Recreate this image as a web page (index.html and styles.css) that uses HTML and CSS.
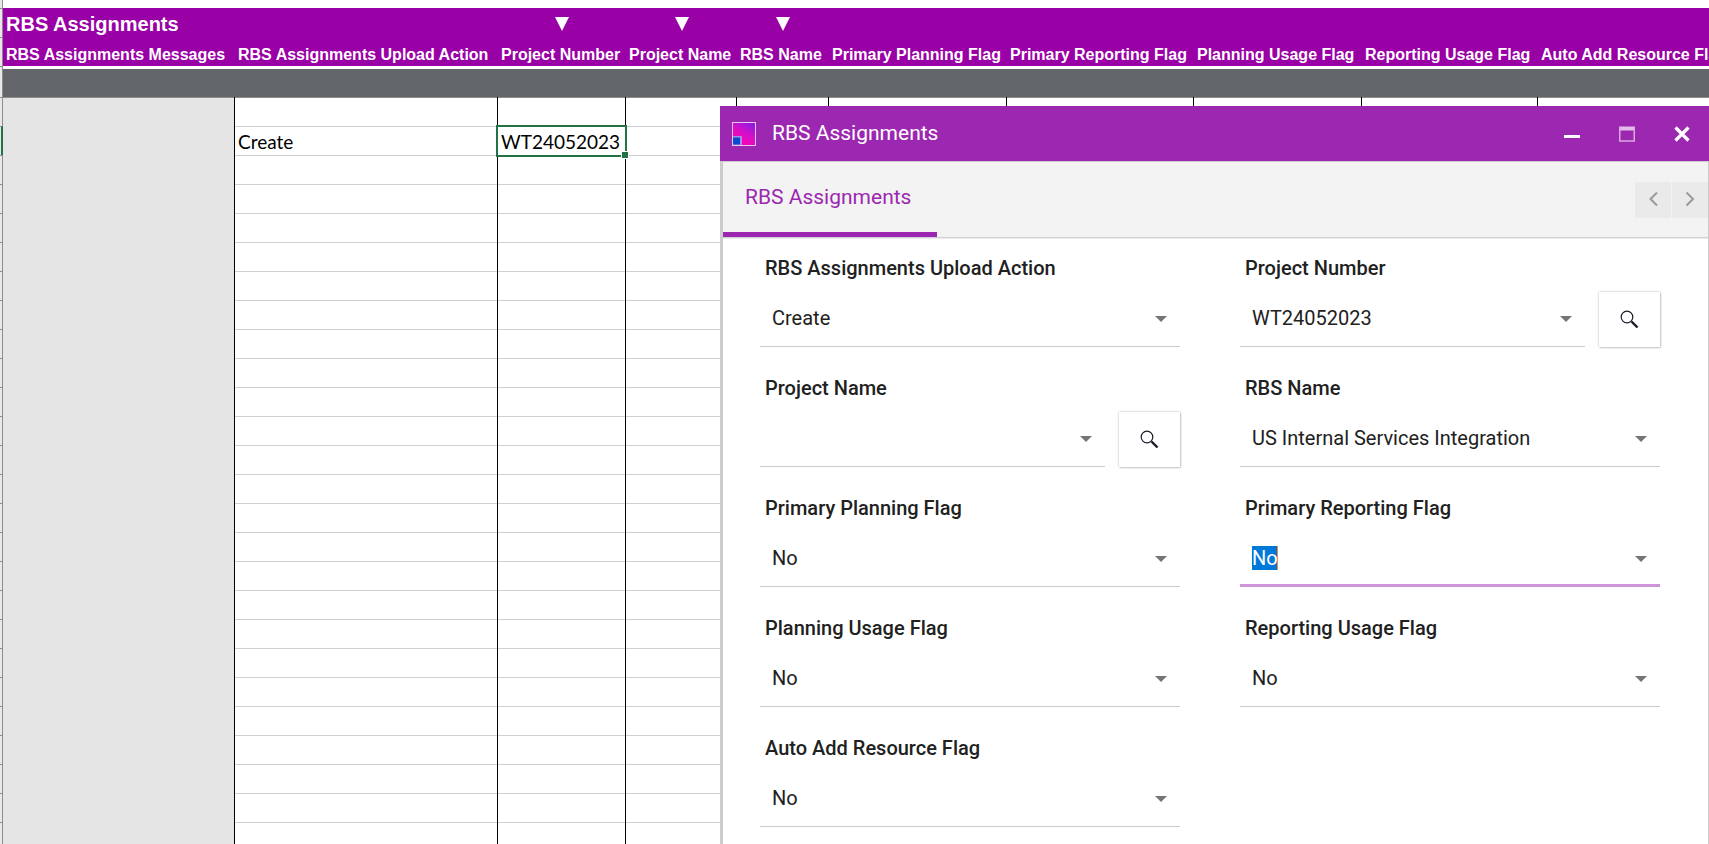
FILE: index.html
```html
<!DOCTYPE html>
<html lang="en">
<head>
  <meta charset="UTF-8">
  <meta name="viewport" content="width=device-width, initial-scale=1.0">
  <title>RBS Assignments</title>
  <link rel="stylesheet" href="styles.css">
</head>
<body>

<!-- Spreadsheet -->
<main class="sheet">
  <table>
    <colgroup>
      <col class="col-rownum">
      <col class="col-messages">
      <col class="col-action">
      <col class="col-number">
      <col class="col-project">
      <col class="col-rbs">
      <col class="col-pplan">
      <col class="col-preport">
      <col class="col-uplan">
      <col class="col-ureport">
      <col class="col-auto">
    </colgroup>
    <thead>
      <tr class="row-top">
        <td class="rownum"></td>
        <td colspan="10"></td>
      </tr>
      <tr class="row-title">
        <td class="rownum"></td>
        <th colspan="2">RBS Assignments</th>
        <td><span class="lov"></span></td>
        <td><span class="lov"></span></td>
        <td><span class="lov"></span></td>
        <td colspan="5"></td>
      </tr>
      <tr class="row-head">
        <td class="rownum"></td>
        <th>RBS Assignments Messages</th>
        <th>RBS Assignments Upload Action</th>
        <th>Project Number</th>
        <th>Project Name</th>
        <th>RBS Name</th>
        <th>Primary Planning Flag</th>
        <th>Primary Reporting Flag</th>
        <th>Planning Usage Flag</th>
        <th>Reporting Usage Flag</th>
        <th>Auto Add Resource Flag</th>
      </tr>
      <tr class="row-band">
        <td class="rownum"></td>
        <td colspan="10"></td>
      </tr>
    </thead>
    <tbody id="rows"></tbody>
  </table>
</main>

<!-- Form window -->
<section class="dialog">
  <header class="titlebar">
    <svg class="app-icon" viewBox="0 0 24 24">
      <defs>
        <linearGradient id="appFill" x1="1" y1="0" x2="0.4" y2="1">
          <stop offset="0" stop-color="#7a1fe6"/>
          <stop offset="0.55" stop-color="#d80fc8"/>
          <stop offset="1" stop-color="#ff00b4"/>
        </linearGradient>
      </defs>
      <rect x="0.5" y="0.5" width="23" height="23" fill="url(#appFill)" stroke="#ecc4f0"/>
      <rect x="1" y="14" width="9" height="9" fill="#a98be6"/>
      <rect x="1" y="15.500" width="7" height="7" fill="#0b49d0"/>
    </svg>
    <h1>RBS Assignments</h1>
    <div class="window-buttons">
      <button type="button" aria-label="Minimize">
        <svg viewBox="0 0 16 16"><path d="M0 9h16v3H0z" fill="#fff"/></svg>
      </button>
      <button type="button" aria-label="Maximize" disabled>
        <svg viewBox="0 0 16 16"><path d="M0 0.5h16v4H0z" fill="#e3bce8"/><path d="M0.75 1v14h14.5V1" fill="none" stroke="#dba9e1" stroke-width="1.5"/></svg>
      </button>
      <button type="button" aria-label="Close">
        <svg viewBox="0 0 16 16"><path d="M1.5 1.5l13 13M14.5 1.5l-13 13" stroke="#fff" stroke-width="3.2"/></svg>
      </button>
    </div>
  </header>

  <div class="dialog-body">
    <nav class="tabs">
      <button type="button" class="tab">RBS Assignments</button>
      <div class="tab-scroll">
        <button type="button" aria-label="Previous tab">
          <svg viewBox="0 0 16 16"><path d="M12 0.500L5.500 7l6.500 6.500" fill="none" stroke="#9a9a9a" stroke-width="2"/></svg>
        </button>
        <button type="button" aria-label="Next tab">
          <svg viewBox="0 0 16 16"><path d="M4.500 0.500L11 7l-6.500 6.500" fill="none" stroke="#9a9a9a" stroke-width="2"/></svg>
        </button>
      </div>
    </nav>

    <form class="fields">
      <div class="field">
        <label for="action">RBS Assignments Upload Action</label>
        <div class="control">
          <select id="action"><option>Create</option></select>
        </div>
      </div>
      <div class="field">
        <label for="number">Project Number</label>
        <div class="control">
          <select id="number"><option>WT24052023</option></select>
          <button type="button" class="search" aria-label="Search project number">
            <svg viewBox="0 0 20 20"><circle cx="7" cy="7" r="5.8"/><path d="M11.500 11.500l6 6"/></svg>
          </button>
        </div>
      </div>
      <div class="field">
        <label for="project">Project Name</label>
        <div class="control">
          <select id="project"><option></option></select>
          <button type="button" class="search" aria-label="Search project name">
            <svg viewBox="0 0 20 20"><circle cx="7" cy="7" r="5.8"/><path d="M11.500 11.500l6 6"/></svg>
          </button>
        </div>
      </div>
      <div class="field">
        <label for="rbs">RBS Name</label>
        <div class="control">
          <select id="rbs"><option>US Internal Services Integration</option></select>
        </div>
      </div>
      <div class="field">
        <label for="pplan">Primary Planning Flag</label>
        <div class="control">
          <select id="pplan"><option>No</option><option>Yes</option></select>
        </div>
      </div>
      <div class="field">
        <label for="preport">Primary Reporting Flag</label>
        <div class="control">
          <select id="preport" class="active"><option>No</option><option>Yes</option></select>
        </div>
      </div>
      <div class="field">
        <label for="uplan">Planning Usage Flag</label>
        <div class="control">
          <select id="uplan"><option>No</option><option>Yes</option></select>
        </div>
      </div>
      <div class="field">
        <label for="ureport">Reporting Usage Flag</label>
        <div class="control">
          <select id="ureport"><option>No</option><option>Yes</option></select>
        </div>
      </div>
      <div class="field">
        <label for="auto">Auto Add Resource Flag</label>
        <div class="control">
          <select id="auto"><option>No</option><option>Yes</option></select>
        </div>
      </div>
    </form>
  </div>
</section>

<script>
  const columns = 10;
  const rowCount = 26;
  // row index -> cell values, in column order
  const data = {
    1: ["", "Create", "WT24052023"],
  };
  const selected = { row: 1, column: 2 };

  const body = document.getElementById("rows");

  for (let r = 0; r < rowCount; r++) {
    const tr = body.insertRow();
    tr.insertCell().className = r === selected.row ? "rownum current" : "rownum";
    for (let c = 0; c < columns; c++) {
      const td = tr.insertCell();
      td.textContent = (data[r] && data[r][c]) || "";
      if (r === selected.row && c === selected.column) {
        td.className = "selected";
      }
    }
  }
</script>

</body>
</html>
```
FILE: styles.css
```css
* {
  margin: 0;
  padding: 0;
  box-sizing: border-box;
}

body {
  position: relative;
  height: 100vh;
  overflow: hidden;
  background: #fff;
  font-family: Roboto, sans-serif;
  font-size: 20px;
  color: #212121;
}

button {
  border: none;
  background: none;
  font: inherit;
  cursor: pointer;
}

/* Spreadsheet */
.sheet {
  height: 100%;
  overflow: hidden;
}

.sheet table {
  width: 1728px;
  table-layout: fixed;
  border-collapse: separate;
  border-spacing: 0;
}

.col-rownum { width: 3px; }
.col-messages { width: 232px; }
.col-action { width: 263px; }
.col-number { width: 128px; }
.col-project { width: 111px; }
.col-rbs { width: 92px; }
.col-pplan { width: 178px; }
.col-preport { width: 187px; }
.col-uplan { width: 168px; }
.col-ureport { width: 176px; }
.col-auto { width: 190px; }

.sheet tr {
  height: 29px;
}

.sheet th,
.sheet td {
  padding: 0 3px;
  white-space: nowrap;
  text-align: left;
}

.sheet .rownum {
  padding: 0;
  background: #e8e8e8;
  border-top: 1px solid #8c8c8c;
  border-right: 1px solid #8c8c8c;
}

.sheet .row-top {
  height: 8px;
}

.sheet .row-top .rownum {
  border-top: none;
}

.row-title th,
.row-title td:not(.rownum),
.row-head th {
  background: #9900a5;
  color: #fff;
  font-family: "Liberation Sans", Arial, sans-serif;
}

.sheet .row-title th {
  padding-top: 2px;
  font-size: 20px;
  line-height: 24px;
}

.row-title td {
  line-height: 0;
}

.sheet .row-title td {
  padding-top: 2px;
  text-align: center;
}

.lov {
  display: inline-block;
  border: 7px solid transparent;
  border-top: 14px solid #fff;
  border-bottom: none;
}

.row-head th {
  font-size: 16px;
  line-height: 23px;
  vertical-align: bottom;
}

.sheet .row-band {
  height: 31px;
}

.row-band td:not(.rownum) {
  background: #63666a;
  border-top: 3px solid #fff;
}

.sheet tbody td {
  padding-top: 2px;
  font-family: Lato, Calibri, sans-serif;
  font-size: 19px;
  line-height: 24px;
  color: #000;
}

.sheet tbody td:not(.rownum) {
  border-right: 1px solid #000;
  box-shadow: inset 0 1px #d0d0d0;
}

.sheet tbody .rownum + td {
  background: #e5e5e5;
  box-shadow: none;
}

.sheet tbody tr:first-child td:not(.rownum) {
  box-shadow: inset 0 1px #8c8c8c;
}

.sheet tbody .current {
  border-right: 2px solid #217346;
}

.selected {
  position: relative;
}

.selected::before {
  content: "";
  position: absolute;
  inset: -1px -2px -2px -2px;
  border: 2px solid #217346;
}

.selected::after {
  content: "";
  position: absolute;
  right: -4px;
  bottom: -4px;
  width: 6px;
  height: 6px;
  background: #217346;
  border: 1px solid #fff;
}

/* Form window */
.dialog {
  position: absolute;
  top: 106px;
  left: 720px;
  right: 0;
  bottom: 0;
  display: flex;
  flex-direction: column;
  background: #fff;
}

.titlebar {
  display: flex;
  align-items: center;
  gap: 16px;
  height: 55px;
  padding-left: 12px;
  background: #9c27b0;
  color: #fff;
}

.titlebar h1 {
  flex: 1;
  padding-bottom: 2px;
  font-size: 21px;
  font-weight: 400;
  line-height: 24px;
}

.app-icon {
  width: 24px;
  height: 24px;
}

.window-buttons {
  display: flex;
}

.window-buttons button {
  display: flex;
  align-items: center;
  justify-content: center;
  width: 55px;
  height: 55px;
}

.window-buttons svg,
.tab-scroll svg {
  width: 16px;
  height: 16px;
}

.dialog-body {
  flex: 1;
  border: 1px solid #ccc;
  border-left-width: 3px;
  border-bottom: none;
}

/* Tabs */
.tabs {
  display: flex;
  justify-content: space-between;
  align-items: center;
  height: 76px;
  background: #f3f3f3;
  border-bottom: 1px solid #d2d2d2;
  box-shadow: 0 1px #ececec;
}

.tab {
  height: 75px;
  padding: 0 26px 0 22px;
  border-bottom: 5px solid #9c27b0;
  font-size: 21px;
  color: #9c27b0;
}

.tab-scroll {
  display: flex;
  gap: 1px;
}

.tab-scroll button {
  display: flex;
  align-items: center;
  justify-content: center;
  width: 36px;
  height: 36px;
  background: #eaeaea;
}

/* Fields */
.fields {
  display: grid;
  grid-template-columns: 1fr 1fr;
  gap: 29px 60px;
  padding: 18px 48px 0 37px;
}

.field label {
  display: block;
  margin-bottom: 11px;
  padding-left: 5px;
  font-weight: 500;
  line-height: 24px;
}

.control {
  display: flex;
  align-items: flex-end;
  gap: 14px;
}

.control select {
  flex: 1;
  min-width: 0;
  height: 56px;
  padding: 0 36px 2px 12px;
  border: none;
  border-bottom: 1px solid #ccc;
  border-radius: 0;
  outline: none;
  appearance: none;
  background: url("data:image/svg+xml,%3Csvg xmlns='http://www.w3.org/2000/svg' width='12' height='6'%3E%3Cpath d='M0 0h12L6 6z' fill='%23757575'/%3E%3C/svg%3E") no-repeat right 13px center;
  font: inherit;
  color: inherit;
}

/* value is selected while the list has focus */
.control select.active {
  border-bottom-color: #ce93d8;
  box-shadow: inset 0 -2px #ce93d8;
  color: #fff;
  background-image:
    url("data:image/svg+xml,%3Csvg xmlns='http://www.w3.org/2000/svg' width='12' height='6'%3E%3Cpath d='M0 0h12L6 6z' fill='%23757575'/%3E%3C/svg%3E"),
    linear-gradient(90deg, #0078d7 25px, #ff8728 25px);
  background-repeat: no-repeat;
  background-position: right 13px center, 12px 15px;
  background-size: 12px 6px, 26px 24px;
}

.active option {
  color: #212121;
}

.search {
  display: flex;
  align-items: center;
  justify-content: center;
  width: 61px;
  height: 55px;
  background: #fff;
  box-shadow: 0 0 2px rgba(0, 0, 0, 0.3), 1px 1px 2px rgba(0, 0, 0, 0.15);
}

.search svg {
  width: 20px;
  height: 20px;
  fill: none;
  stroke: #1a1a2a;
  stroke-width: 1.2;
}

.search path {
  stroke-width: 2.4;
}
```
